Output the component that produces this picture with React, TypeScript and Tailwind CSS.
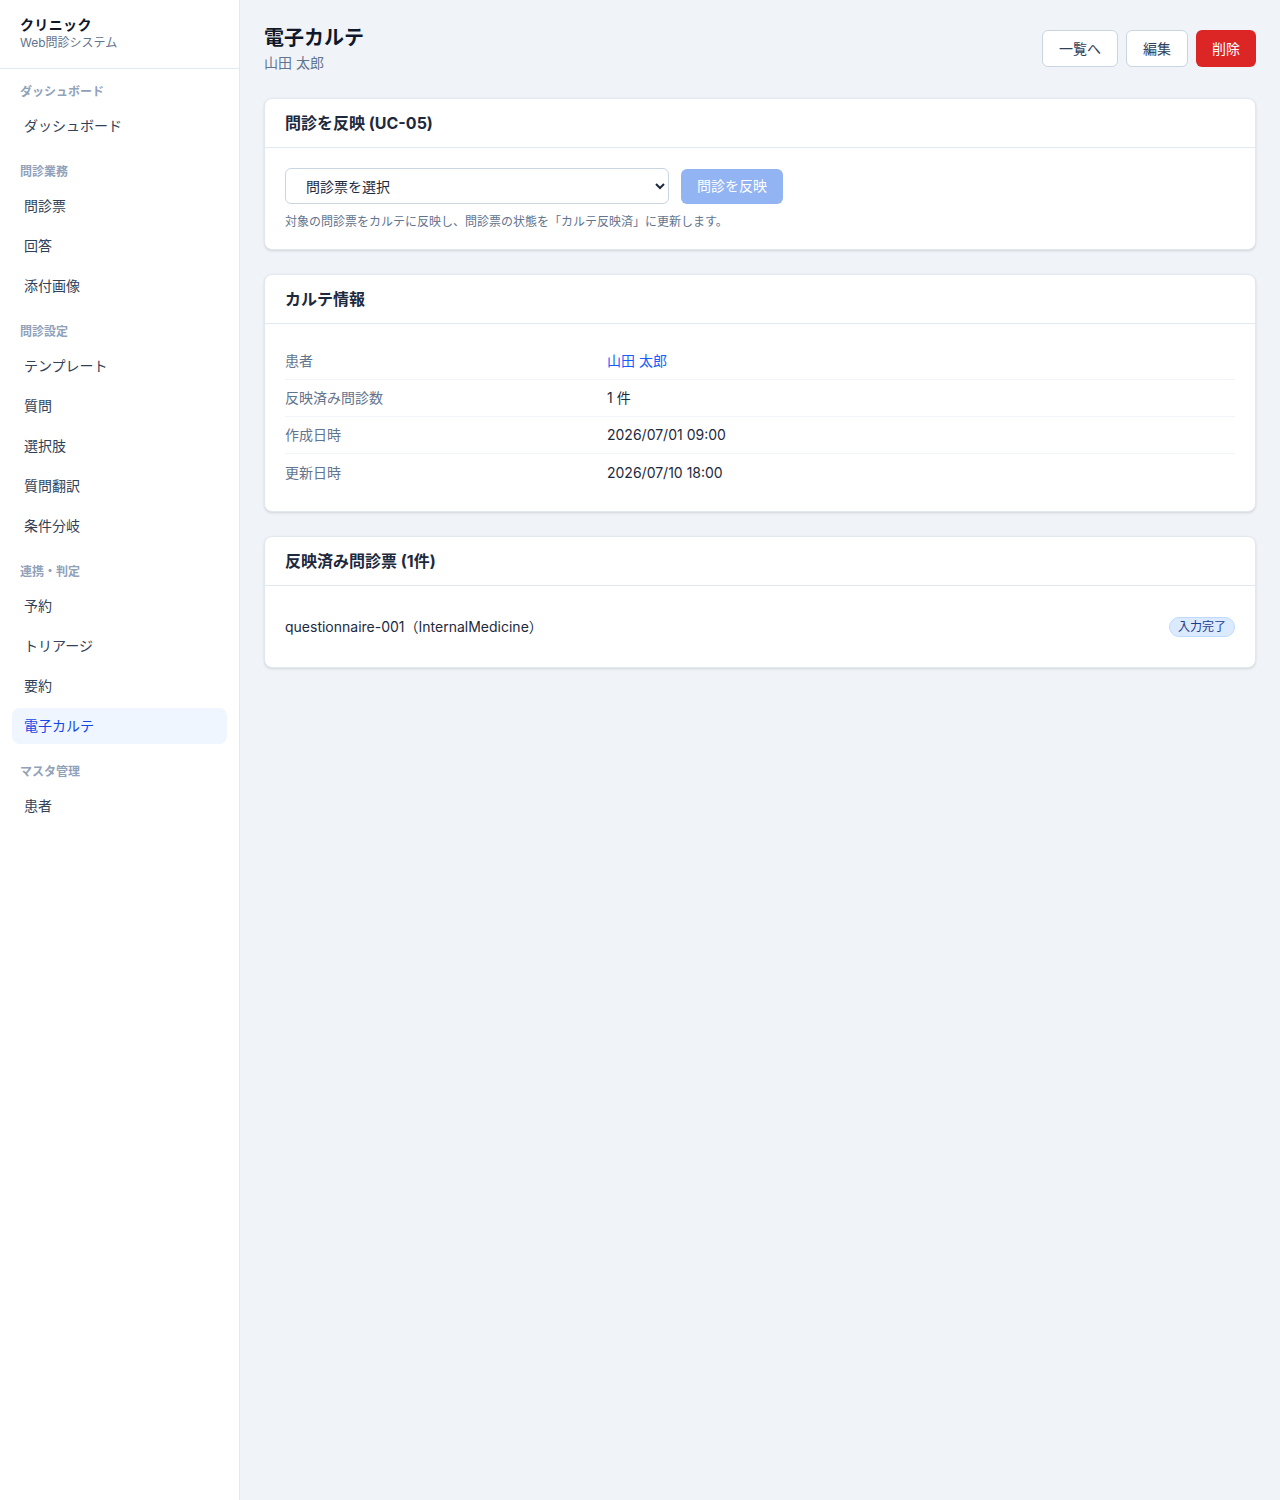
import { useState } from 'react'

type NavGroup = { label: string; items: string[] }

const NAV: NavGroup[] = [
  { label: 'ダッシュボード', items: ['ダッシュボード'] },
  { label: '問診業務', items: ['問診票', '回答', '添付画像'] },
  { label: '問診設定', items: ['テンプレート', '質問', '選択肢', '質問翻訳', '条件分岐'] },
  { label: '連携・判定', items: ['予約', 'トリアージ', '要約', '電子カルテ'] },
  { label: 'マスタ管理', items: ['患者'] },
]

const INFO: { label: string; value: string; link?: boolean }[] = [
  { label: '患者', value: '山田 太郎', link: true },
  { label: '反映済み問診数', value: '1 件' },
  { label: '作成日時', value: '2026/07/01 09:00' },
  { label: '更新日時', value: '2026/07/10 18:00' },
]

function Sidebar() {
  return (
    <aside className="w-[240px] shrink-0 bg-white border-r border-slate-200 min-h-[1500px]">
      <div className="h-[69px] border-b border-slate-200 px-5 pt-[15px]">
        <p className="text-sm font-bold text-slate-900 leading-5 tracking-wide">クリニック</p>
        <p className="text-xs text-slate-500 leading-4">Web問診システム</p>
      </div>
      <nav className="px-3 pt-[15px] flex flex-col gap-5">
        {NAV.map((group) => (
          <div key={group.label} className="flex flex-col">
            <p className="px-2 text-xs font-bold text-slate-400 leading-4 mb-2">{group.label}</p>
            <div className="flex flex-col gap-1">
              {group.items.map((item) => {
                const active = item === '電子カルテ'
                return (
                  <a
                    key={item}
                    className={
                      active
                        ? 'h-9 flex items-center px-3 rounded-lg bg-blue-50 text-blue-700 text-sm'
                        : 'h-9 flex items-center px-3 rounded-lg text-slate-700 text-sm'
                    }
                  >
                    {item}
                  </a>
                )
              })}
            </div>
          </div>
        ))}
      </nav>
    </aside>
  )
}

function Card({ title, children }: { title: string; children: React.ReactNode }) {
  return (
    <section className="bg-white border border-slate-200 rounded-lg shadow-sm">
      <header className="h-[49px] flex items-center px-5 border-b border-slate-200">
        <h2 className="text-base font-bold text-slate-800">{title}</h2>
      </header>
      {children}
    </section>
  )
}

export default function App() {
  const [selected, setSelected] = useState('')

  return (
    <div
      className="flex min-h-[1500px] bg-[#f0f4f8]"
      style={{ fontFamily: 'Inter, "Noto Sans CJK JP", sans-serif' }}
    >
      <Sidebar />

      <main className="flex-1 px-6 pt-6">
        {/* Page title + actions */}
        <div className="flex items-start justify-between mb-[25px]">
          <div>
            <h1 className="text-xl font-bold text-slate-900 leading-7">電子カルテ</h1>
            <p className="text-sm text-slate-500 leading-5 mt-px">山田 太郎</p>
          </div>
          <div className="flex gap-2 mt-1.5">
            <button className="h-[37px] px-4 rounded-md border border-slate-300 bg-white text-sm text-slate-700">
              一覧へ
            </button>
            <button className="h-[37px] px-4 rounded-md border border-slate-300 bg-white text-sm text-slate-700">
              編集
            </button>
            <button className="h-[37px] px-4 rounded-md bg-[#dc2626] text-sm text-white">削除</button>
          </div>
        </div>

        <div className="flex flex-col gap-6">
          <Card title="問診を反映 (UC-05)">
            <div className="px-5 pt-5 pb-[19px]">
              <div className="flex items-center gap-3">
                <select
                  value={selected}
                  onChange={(e) => setSelected(e.target.value)}
                  className="w-[384px] h-9 px-4 rounded-md border border-slate-300 bg-white text-sm text-slate-800"
                >
                  <option value="">問診票を選択</option>
                  <option value="q1">questionnaire-001</option>
                </select>
                <button
                  disabled
                  className="h-[35px] px-4 rounded-md bg-[#93b4f3] text-sm text-white"
                >
                  問診を反映
                </button>
              </div>
              <p className="mt-2.5 text-xs text-slate-500">
                対象の問診票をカルテに反映し、問診票の状態を「カルテ反映済」に更新します。
              </p>
            </div>
          </Card>

          <Card title="カルテ情報">
            <dl className="px-5 pt-[19px] pb-5">
              {INFO.map((row, i) => (
                <div
                  key={row.label}
                  className={
                    i < INFO.length - 1
                      ? 'flex items-center h-[37px] border-b border-slate-100'
                      : 'flex items-center h-[37px]'
                  }
                >
                  <dt className="w-[322px] text-sm text-slate-500">{row.label}</dt>
                  <dd className={row.link ? 'text-sm text-blue-600' : 'text-sm text-slate-800'}>
                    {row.value}
                  </dd>
                </div>
              ))}
            </dl>
          </Card>

          <Card title="反映済み問診票 (1件)">
            <div className="px-5 h-[81px] flex items-center justify-between">
              <span className="text-sm text-slate-800">questionnaire-001（InternalMedicine）</span>
              <span className="px-2 h-5 flex items-center rounded-full bg-blue-100 border border-blue-200 text-xs text-blue-900">
                入力完了
              </span>
            </div>
          </Card>
        </div>
      </main>
    </div>
  )
}
